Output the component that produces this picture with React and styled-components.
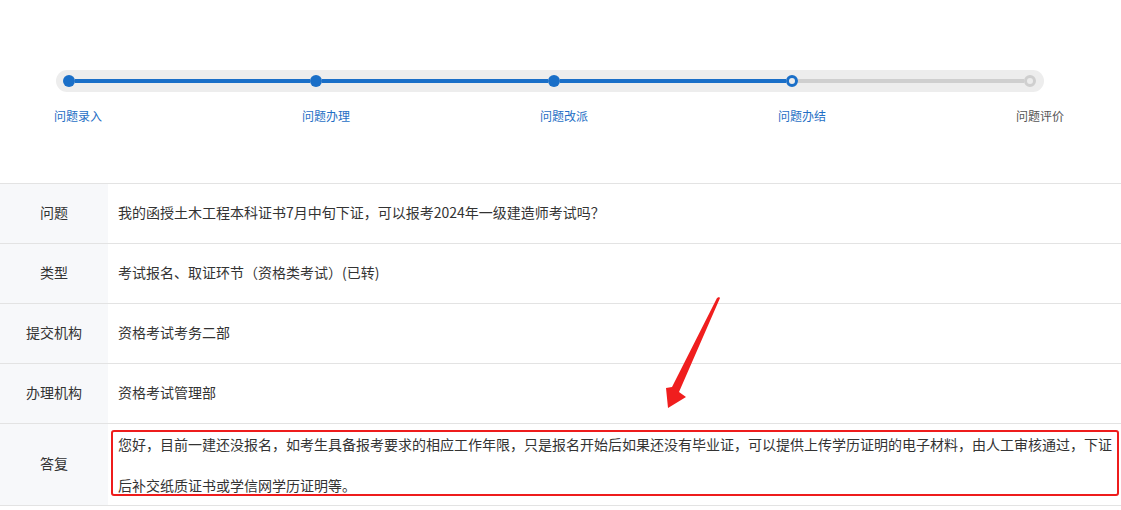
import styled, { createGlobalStyle } from "styled-components";

const GlobalStyle = createGlobalStyle`
  body {
    margin: 0;
    background: #fff;
    font-family: "Noto Sans CJK SC", "Noto Sans", sans-serif;
    color: #333;
  }
`;

const Page = styled.div`
  position: relative;
  width: 1121px;
  padding-top: 70px;
`;

const Track = styled.div`
  display: flex;
  align-items: center;
  margin-left: 56px;
  width: 988px;
  height: 22px;
  padding: 0 8px 0 7px;
  box-sizing: border-box;
  border-radius: 11px;
  background: #ededed;
`;

const Dot = styled.div`
  flex: none;
  width: 12px;
  height: 12px;
  border-radius: 50%;
  box-sizing: border-box;
  background: ${(p) => (p.$state === "done" ? "#1a6fc8" : "#ececec")};
  border: ${(p) =>
    p.$state === "done"
      ? "none"
      : p.$state === "current"
      ? "3px solid #1a6fc8"
      : "3px solid #cfcfcf"};
`;

const Line = styled.div`
  flex: none;
  width: ${(p) => p.$w}px;
  height: 4px;
  background: ${(p) => (p.$done ? "#1a6fc8" : "#cfcfcf")};
`;

const Labels = styled.div`
  display: grid;
  grid-template-columns: 248px 238px 238px 238px auto;
  padding-left: 54px;
  margin-top: 16px;
  font-size: 12px;
  line-height: 16px;
`;

const Label = styled.span`
  color: ${(p) => (p.$active ? "#1f6fc5" : "#555")};
`;

const Table = styled.div`
  margin-top: 59px;
  border-top: 1px solid #e3e3e3;
`;

const Row = styled.div`
  display: grid;
  grid-template-columns: 108px 1fr;
  border-bottom: 1px solid #e3e3e3;
  min-height: ${(p) => p.$h || 59}px;
  font-size: 14px;
`;

const Head = styled.div`
  display: flex;
  align-items: center;
  justify-content: center;
  padding-bottom: 3px;
  background: #f7f8fa;
  color: #333;
`;

const Value = styled.div`
  position: relative;
  display: flex;
  align-items: center;
  padding: 0 5px ${(p) => (p.$lh ? 0 : 3)}px 10px;
  color: #333;
  line-height: ${(p) => p.$lh || 20}px;
`;

const Highlight = styled.div`
  position: absolute;
  left: 3px;
  right: 2px;
  top: 6px;
  bottom: 9px;
  border: 2.5px solid #ee1c1c;
  border-radius: 3px;
  pointer-events: none;
`;

const Arrow = styled.svg`
  position: absolute;
  left: 660px;
  top: 294px;
`;

const steps = [
  { name: "问题录入", state: "done" },
  { name: "问题办理", state: "done" },
  { name: "问题改派", state: "done" },
  { name: "问题办结", state: "current" },
  { name: "问题评价", state: "todo" },
];

const lines = [
  { w: 235, done: true },
  { w: 226, done: true },
  { w: 226, done: true },
  { w: 226, done: false },
];

const rows = [
  { head: "问题", value: "我的函授土木工程本科证书7月中旬下证，可以报考2024年一级建造师考试吗？" },
  { head: "类型", value: "考试报名、取证环节（资格类考试）(已转)" },
  { head: "提交机构", value: "资格考试考务二部" },
  { head: "办理机构", value: "资格考试管理部" },
];

const App = () => {
  return (
    <Page>
      <GlobalStyle />
      <Track>
        {steps.map((s, i) => [
          <Dot key={s.name} $state={s.state} />,
          lines[i] && <Line key={"l" + i} $w={lines[i].w} $done={lines[i].done} />,
        ])}
      </Track>
      <Labels>
        {steps.map((s) => (
          <Label key={s.name} $active={s.state !== "todo"}>
            {s.name}
          </Label>
        ))}
      </Labels>

      <Table>
        {rows.map((r) => (
          <Row key={r.head}>
            <Head>{r.head}</Head>
            <Value>{r.value}</Value>
          </Row>
        ))}
        <Row $h={80}>
          <Head>答复</Head>
          <Value $lh={40.5}>
            您好，目前一建还没报名，如考生具备报考要求的相应工作年限，只是报名开始后如果还没有毕业证，可以提供上传学历证明的电子材料，由人工审核通过，下证后补交纸质证书或学信网学历证明等。
            <Highlight />
          </Value>
        </Row>
      </Table>

      <Arrow width="64" height="118" viewBox="0 0 64 118">
        <polygon
          points="59,3 57,4 12,93 6,94 8,114 26,103 19,98 60,4"
          fill="#f01e1e"
        />
      </Arrow>
    </Page>
  );
};

export default App;
